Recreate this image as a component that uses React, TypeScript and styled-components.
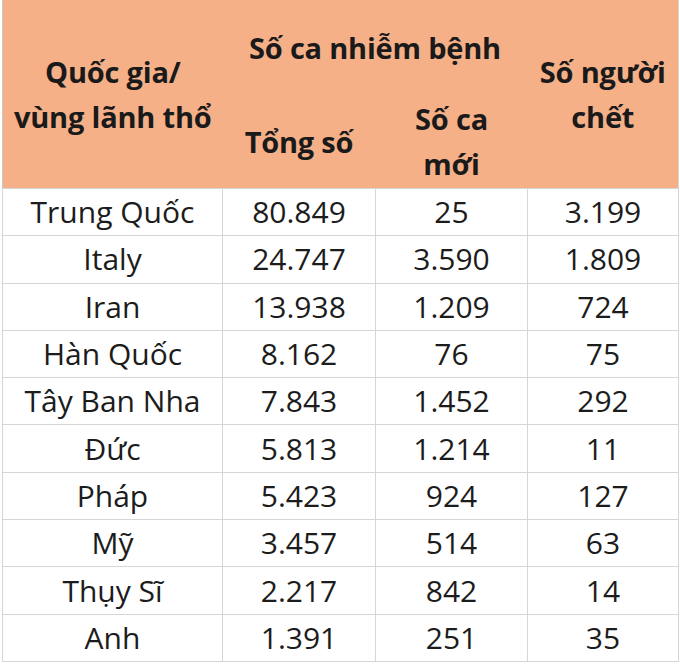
import React from 'react';
import styled, { createGlobalStyle } from 'styled-components';

interface RowData {
    country: string;
    total: string;
    newCases: string;
    deaths: string;
}

const rows: RowData[] = [
    { country: 'Trung Quốc', total: '80.849', newCases: '25', deaths: '3.199' },
    { country: 'Italy', total: '24.747', newCases: '3.590', deaths: '1.809' },
    { country: 'Iran', total: '13.938', newCases: '1.209', deaths: '724' },
    { country: 'Hàn Quốc', total: '8.162', newCases: '76', deaths: '75' },
    { country: 'Tây Ban Nha', total: '7.843', newCases: '1.452', deaths: '292' },
    { country: 'Đức', total: '5.813', newCases: '1.214', deaths: '11' },
    { country: 'Pháp', total: '5.423', newCases: '924', deaths: '127' },
    { country: 'Mỹ', total: '3.457', newCases: '514', deaths: '63' },
    { country: 'Thụy Sĩ', total: '2.217', newCases: '842', deaths: '14' },
    { country: 'Anh', total: '1.391', newCases: '251', deaths: '35' },
];

const GlobalStyle = createGlobalStyle`
    html, body {
        margin: 0;
        padding: 0;
        background: #ffffff;
    }
    body {
        font-family: 'Open Sans', 'Noto Sans', sans-serif;
        color: #1c1c1c;
    }
`;

const Page = styled.div`
    width: 680px;
    height: 665px;
    padding: 0 2px 0 2px;
    box-sizing: border-box;
    background: #ffffff;
`;

const Table = styled.table`
    width: 676px;
    border-collapse: collapse;
    table-layout: fixed;
    border-left: 1px solid #c9c9c9;
    border-right: 1px solid #d6d6d6;
`;

const HeadCell = styled.th<{ $h: number }>`
    background: #f5b088;
    height: ${p => p.$h}px;
    padding: 0;
    font-weight: 700;
    font-size: 29px;
    line-height: 45px;
    color: #1a1a1a;
    text-align: center;
    vertical-align: middle;
    letter-spacing: -0.2px;
`;

const Cell = styled.td`
    height: 46.3px;
    padding: 0;
    border: 1px solid #d6d6d6;
    font-size: 30px;
    line-height: 32px;
    text-align: center;
    vertical-align: middle;
    color: #1c1c1c;
`;

export default function App() {
    return (
        <Page>
            <GlobalStyle />
            <Table>
                <colgroup>
                    <col style={{ width: 220 }} />
                    <col style={{ width: 153 }} />
                    <col style={{ width: 152 }} />
                    <col style={{ width: 151 }} />
                </colgroup>
                <thead>
                    <tr>
                        <HeadCell $h={94} rowSpan={2}>
                            Quốc gia/
                            <br />
                            vùng lãnh thổ
                        </HeadCell>
                        <HeadCell $h={94} colSpan={2}>Số ca nhiễm bệnh</HeadCell>
                        <HeadCell $h={94} rowSpan={2}>
                            Số người
                            <br />
                            chết
                        </HeadCell>
                    </tr>
                    <tr>
                        <HeadCell $h={94}>Tổng số</HeadCell>
                        <HeadCell $h={94}>
                            Số ca
                            <br />
                            mới
                        </HeadCell>
                    </tr>
                </thead>
                <tbody>
                    {rows.map(r => (
                        <tr key={r.country}>
                            <Cell>{r.country}</Cell>
                            <Cell>{r.total}</Cell>
                            <Cell>{r.newCases}</Cell>
                            <Cell>{r.deaths}</Cell>
                        </tr>
                    ))}
                </tbody>
            </Table>
        </Page>
    );
}
